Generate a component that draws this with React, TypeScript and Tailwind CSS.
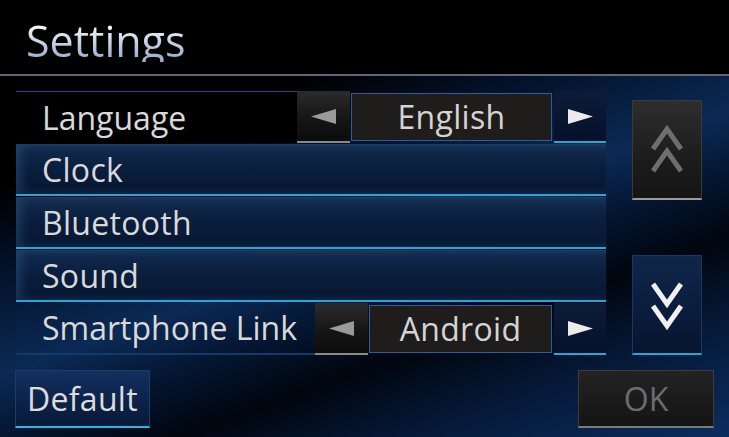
import React from "react";

const font = { fontFamily: '"Open Sans", "Noto Sans", sans-serif' };

function TriLeft({ color }: { color: string }) {
  return (
    <svg width="25" height="15" viewBox="0 0 25 15">
      <polygon points="0,7.5 25,0 25,15" fill={color} />
    </svg>
  );
}
function TriRight({ color }: { color: string }) {
  return (
    <svg width="25" height="15" viewBox="0 0 25 15">
      <polygon points="25,7.5 0,0 0,15" fill={color} />
    </svg>
  );
}

function Chevrons({ up, color }: { up: boolean; color: string }) {
  return (
    <svg width="32" height="52" viewBox="0 0 32 52">
      {up ? (
        <g fill="none" stroke={color} strokeWidth="5" strokeLinejoin="miter">
          <polyline points="2,25 16,5 30,25" />
          <polyline points="2,47 16,27 30,47" />
        </g>
      ) : (
        <g fill="none" stroke={color} strokeWidth="5" strokeLinejoin="miter">
          <polyline points="2,5 16,25 30,5" />
          <polyline points="2,27 16,47 30,27" />
        </g>
      )}
    </svg>
  );
}

function MenuRow({ label }: { label: string }) {
  return (
    <div className="h-[52px] flex items-center pl-[26px] bg-[linear-gradient(180deg,#112b4e_0%,#0a1f3e_45%,#061630_100%)] border-t border-t-[#1d3a63] border-b-2 border-b-[#29a6d8] shadow-[inset_6px_0_10px_rgba(80,130,190,0.25)]">
      <span className="text-[32px] leading-none text-[#d9d9d9] tracking-[0.3px]">{label}</span>
    </div>
  );
}

function SelectRow({
  label,
  value,
  labelW,
  valueW,
  black,
}: {
  label: string;
  value: string;
  labelW: string;
  valueW: string;
  black?: boolean;
}) {
  return (
    <div className="h-[52px] flex">
      <div
        className={
          labelW +
          " flex items-center pl-[26px] " +
          (black
            ? "bg-black border-t border-t-[#1b4f8f]"
            : "border-b-2 border-b-[#123a6a]")
        }
      >
        <span className="text-[32px] leading-none text-[#d9d9d9] whitespace-nowrap">{label}</span>
      </div>
      <div className="w-[53px] flex items-center justify-center bg-[linear-gradient(180deg,#2b2b2b_0%,#141414_60%,#0c0c0c_100%)] border-b-2 border-b-[#8a8a8a]">
        <TriLeft color="#9a9a9a" />
      </div>
      <div className={valueW + " ml-px my-[2px] flex items-center justify-center bg-[#1f1d1b] border border-[#2c5d9c]"}>
        <span className="text-[32px] leading-none text-[#d4d4d4] tracking-[0.3px]">{value}</span>
      </div>
      <div className="w-[52px] ml-[2px] flex items-center justify-center bg-[linear-gradient(180deg,#0c1c38_0%,#06112a_100%)] border-b-2 border-b-[#2aa6d6]">
        <TriRight color="#ececec" />
      </div>
    </div>
  );
}

export default function App() {
  return (
    <div
      style={font}
      className="w-[729px] h-[437px] overflow-hidden flex flex-col bg-[#020a1c]"
    >
      <div className="h-[76px] shrink-0 bg-black border-b-2 border-b-[#5e6677] flex items-center pl-[26px]">
        <span className="text-[43px] leading-none pt-[7px] bg-[linear-gradient(180deg,#ffffff_20%,#9fb2cc_90%)] bg-clip-text text-transparent">
          Settings
        </span>
      </div>
      <div className="flex-1 flex flex-col bg-[linear-gradient(160deg,#000000_0%,#000000_18%,#031026_30%,#0b2a55_48%,#041530_58%,#01060f_68%,#061a3a_82%,#0b2d5e_100%)]">
        <div className="flex pt-[15px]">
          <div className="ml-[16px] w-[590px] flex flex-col gap-px">
            <SelectRow label="Language" value="English" labelW="w-[281px]" valueW="w-[201px]" black />
            <MenuRow label="Clock" />
            <MenuRow label="Bluetooth" />
            <MenuRow label="Sound" />
            <SelectRow label="Smartphone Link" value="Android" labelW="w-[299px]" valueW="w-[183px]" />
          </div>
          <div className="ml-[26px] w-[70px] flex flex-col pt-[9px]">
            <div className="h-[100px] flex items-center justify-center bg-[linear-gradient(180deg,#2e2e2e_0%,#1c1c1c_60%,#151515_100%)] border border-[#3a3a3a] border-b-2 border-b-[#9a9a9a]">
              <Chevrons up color="#6e6e6e" />
            </div>
            <div className="h-[100px] mt-[55px] flex items-center justify-center bg-[linear-gradient(180deg,#10264a_0%,#0a1c3b_60%,#07152e_100%)] border border-[#1b3660] border-b-2 border-b-[#2aa6d6]">
              <Chevrons up={false} color="#f0f0f0" />
            </div>
          </div>
        </div>
        <div className="flex justify-between mt-[15px] pl-[15px] pr-[15px]">
          <div className="w-[135px] h-[58px] flex items-center justify-center bg-[linear-gradient(180deg,#123060_0%,#0c2147_60%,#091a3a_100%)] border border-[#1e3c68] border-b-2 border-b-[#2fb6e0]">
            <span className="text-[32px] leading-none text-[#dcdcdc] tracking-[0.3px]">Default</span>
          </div>
          <div className="w-[136px] h-[58px] flex items-center justify-center bg-[linear-gradient(180deg,#232323_0%,#1a1a1a_60%,#141414_100%)] border border-[#3c3c3c] border-b-2 border-b-[#7a7a7a]">
            <span className="text-[32px] leading-none text-[#6c6c6c]">OK</span>
          </div>
        </div>
      </div>
    </div>
  );
}
